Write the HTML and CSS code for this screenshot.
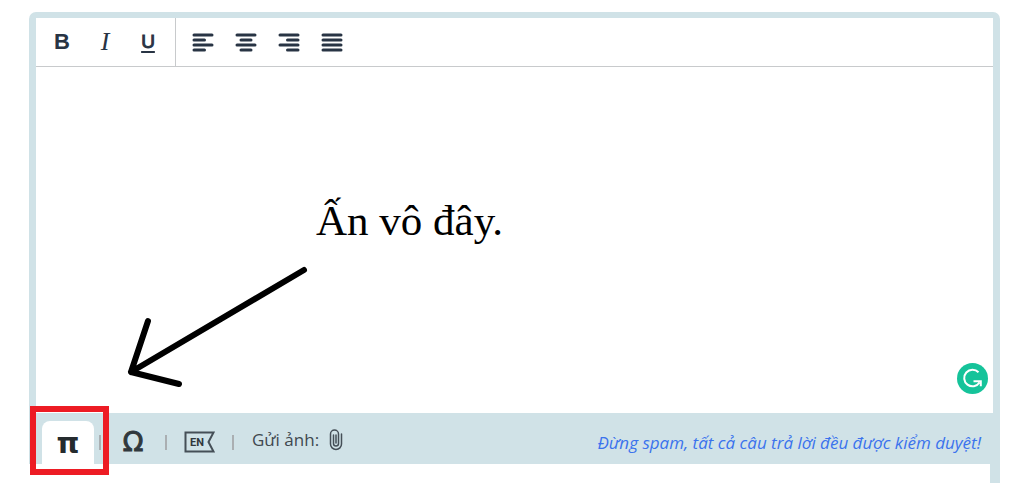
FILE: index.html
```
<!DOCTYPE html>
<html lang="vi">
<head>
  <meta charset="UTF-8">
  <meta name="viewport" content="width=device-width, initial-scale=1">
  <title>Trả lời</title>
  <link rel="stylesheet" href="styles.css">
</head>
<body>
  <main class="editor">
    <div class="editor-frame">
      <!-- Formatting buttons -->
      <div class="toolbar">
        <div class="tool-group">
          <button class="tool bold" type="button" aria-label="Bold">B</button>
          <button class="tool italic" type="button" aria-label="Italic">I</button>
          <button class="tool underline" type="button" aria-label="Underline">U</button>
        </div>
        <div class="tool-group">
          <button class="tool" type="button" aria-label="Align left">
            <svg width="22" height="20" viewBox="0 0 22 20"><path d="M2 3h18M2 8h10.500M2 13h18M2 18h10.500"/></svg>
          </button>
          <button class="tool" type="button" aria-label="Align center">
            <svg width="22" height="20" viewBox="0 0 22 20"><path d="M2 3h18M6 8h10M2 13h18M6 18h10"/></svg>
          </button>
          <button class="tool" type="button" aria-label="Align right">
            <svg width="22" height="20" viewBox="0 0 22 20"><path d="M2 3h18M9.500 8h10.500M2 13h18M9.500 18h10.500"/></svg>
          </button>
          <button class="tool" type="button" aria-label="Justify">
            <svg width="22" height="20" viewBox="0 0 22 20"><path d="M2 3h18M2 8h18M2 13h18M2 18h18"/></svg>
          </button>
        </div>
      </div>

      <div class="writing-area">
        <textarea class="answer" aria-label="Câu trả lời"></textarea>
        <button class="checker" type="button" aria-label="Grammar check">
          <svg width="31" height="31" viewBox="0 0 31 31">
            <circle cx="15.500" cy="15.500" r="15.500" fill="#15c39a"/>
            <path d="M21.500 9.300A8.300 8.300 0 1 0 22.500 19.500M16.500 18.200h7.300v5" fill="none" stroke="#fff" stroke-width="2"/>
          </svg>
        </button>
      </div>

      <!-- Insert tools -->
      <div class="insert-bar">
        <button class="insert pi" type="button" aria-label="Công thức">π</button>
        <span class="divider first"></span>
        <button class="insert omega" type="button" aria-label="Ký tự đặc biệt">Ω</button>
        <span class="divider"></span>
        <button class="insert lang" type="button" aria-label="English">
          <svg width="31" height="22" viewBox="0 0 31 22">
            <path d="M1.500 1.500h28l-5 9.500 5 9.500h-28z" fill="none" stroke="#454f57" stroke-width="2"/>
            <text x="6" y="15">EN</text>
          </svg>
        </button>
        <span class="divider"></span>
        <button class="insert attach" type="button">
          Gửi ảnh:
          <svg width="14" height="22" viewBox="0 0 14 22">
            <path d="M4.500 6v8.500a2.500 2.500 0 0 0 5 0V5a4 4 0 0 0-8 0v10a5.500 5.500 0 0 0 11 0V5M7 6v8" fill="none" stroke="#454f57" stroke-width="1.500" stroke-linecap="round"/>
          </svg>
        </button>
        <p class="notice">Đừng spam, tất cả câu trả lời đều được kiểm duyệt!</p>
        <span class="highlight"></span>
      </div>
    </div>
    <div class="editor-tail"></div>

    <!-- Hint drawn over the editor -->
    <p class="hint">Ấn vô đây.</p>
    <svg class="arrow" width="190" height="130" viewBox="0 0 190 130">
      <path d="M183 7L10 109M27 58L10 109L58 121"/>
    </svg>
  </main>
</body>
</html>
```
FILE: styles.css
```
* {
  box-sizing: border-box;
}
body {
  margin: 0;
  background: #fff;
  font-family: "Open Sans", "Noto Sans", sans-serif;
  color: #3f484f;
}
button {
  border: 0;
  padding: 0;
  background: none;
  color: inherit;
  cursor: pointer;
}
svg {
  display: block;
}

/* Editor box */
.editor {
  position: relative;
  margin: 12px 24px 0 29px;
}
.editor-frame {
  border: 7px solid #d0e2e7;
  border-top-width: 6px;
  border-bottom: 0;
  border-radius: 7px 7px 0 0;
}
.editor-tail {
  height: 19px;
  border-right: 10px solid #d0e2e7;
}

/* Toolbar */
.toolbar {
  display: flex;
  height: 49px;
  border-bottom: 1px solid #c8cacc;
}
.tool-group {
  display: flex;
  align-items: center;
  gap: 9px;
  padding: 0 10px 0 9px;
}
.tool-group + .tool-group {
  padding-left: 10px;
  border-left: 1px solid #c8cacc;
}
.tool {
  display: flex;
  align-items: center;
  justify-content: center;
  width: 34px;
  height: 34px;
  color: #283444;
  font: 700 22px/34px "Liberation Sans", Arial, sans-serif;
}
.tool path {
  stroke: #283444;
  stroke-width: 3;
  stroke-linecap: round;
}
.italic {
  font: italic 26px/34px "Liberation Serif", serif;
}
.underline {
  font-weight: 400;
  font-size: 19px;
  -webkit-text-stroke: 1px;
  text-decoration: underline 2px;
  text-underline-offset: 3px;
}

/* Text area */
.writing-area {
  position: relative;
}
.answer {
  display: block;
  width: 100%;
  height: 346px;
  padding: 16px;
  border: 0;
  outline: 0;
  resize: none;
  font: 16px/24px "Open Sans", sans-serif;
}
.checker {
  position: absolute;
  right: 5px;
  bottom: 19px;
}

/* Bottom bar */
.insert-bar {
  position: relative;
  display: flex;
  align-items: center;
  height: 51px;
  padding: 0 12px 0 6px;
  background: #d0e2e7;
}
.insert {
  height: 43px;
}
.pi {
  align-self: flex-end;
  width: 52px;
  border-radius: 8px 8px 0 0;
  background: #fff;
  color: #252b2e;
  font: 700 29px/36px "DejaVu Sans", sans-serif;
}
.divider {
  width: 2px;
  height: 15px;
  margin-top: 8px;
  background: #aaafb2;
}
.divider.first {
  margin-left: 5px;
}
.omega {
  width: 64px;
  margin-top: 5px;
  color: #30383d;
  font: 27px/43px "DejaVu Sans", sans-serif;
  -webkit-text-stroke: 1px;
}
.lang {
  margin: 6px 17px 0;
}
.lang text {
  font: 700 11px Roboto, sans-serif;
  fill: #30383d;
}
.attach {
  display: flex;
  align-items: center;
  gap: 10px;
  margin: 3px 0 0 18px;
  font: 17px/24px "Open Sans", sans-serif;
}
.notice {
  margin: 9px 0 0 auto;
  color: #3b73ed;
  font-size: 17px;
  font-style: italic;
  line-height: 24px;
  white-space: nowrap;
}
.highlight {
  position: absolute;
  top: -7px;
  left: -6px;
  width: 79px;
  height: 69px;
  border: 6px solid #ed1c24;
  pointer-events: none;
}

/* Hint */
.hint {
  position: absolute;
  top: 184px;
  left: 287px;
  margin: 0;
  color: #000;
  font: 43px/50px "Liberation Serif", serif;
}
.arrow {
  position: absolute;
  top: 251px;
  left: 92px;
  pointer-events: none;
}
.arrow path {
  fill: none;
  stroke: #000;
  stroke-width: 6;
  stroke-linecap: round;
  stroke-linejoin: round;
}
```
